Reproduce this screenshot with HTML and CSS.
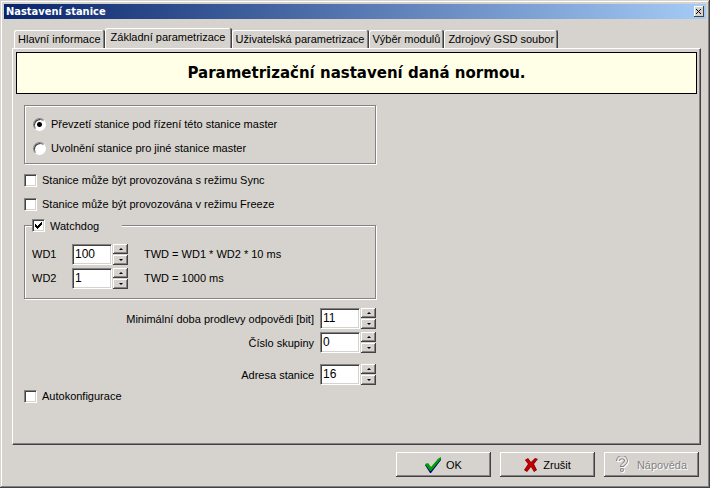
FILE: index.html
```html
<!DOCTYPE html>
<html lang="cs">
<head>
  <meta charset="UTF-8" />
  <meta name="viewport" content="width=device-width, initial-scale=1.0"/>
  <title>Nastavení stanice</title>
  <link rel="stylesheet" href="styles.css">
</head>
<body>
  <form class="window">
    <header class="titlebar">
      <h1>Nastavení stanice</h1>
      <button type="button" class="close" aria-label="Zavřít">
        <svg width="6" height="5" viewBox="0 0 6 5" shape-rendering="crispEdges"><path d="M0 0h1v1h1v1h1v1h1v1h1v1h-1v-1h-1v-1h-1v-1h-1v-1h-1zM4 0h1v1h-1v1h-1v1h-1v1h-1v1h-1v-1h1v-1h1v-1h1v-1h1z"/></svg>
      </button>
    </header>

    <div class="content">
      <nav class="tabs" role="tablist">
        <button type="button" role="tab" class="tab">Hlavní informace</button>
        <button type="button" role="tab" class="tab active" aria-selected="true">Základní parametrizace</button>
        <button type="button" role="tab" class="tab">Uživatelská parametrizace</button>
        <button type="button" role="tab" class="tab">Výběr modulů</button>
        <button type="button" role="tab" class="tab">Zdrojový GSD soubor</button>
      </nav>

      <main class="panel">
        <h2 class="banner">Parametrizační nastavení daná normou.</h2>

        <div class="settings">
          <fieldset class="group modes">
            <label class="option"><input type="radio" name="mode" checked>Převzetí stanice pod řízení této stanice master</label>
            <label class="option"><input type="radio" name="mode">Uvolnění stanice pro jiné stanice master</label>
          </fieldset>

          <div class="checks">
            <label class="option"><input type="checkbox">Stanice může být provozována s režimu Sync</label>
            <label class="option"><input type="checkbox">Stanice může být provozována v režimu Freeze</label>
          </div>

          <fieldset class="group watchdog">
            <legend><label class="option"><input type="checkbox" checked>Watchdog</label></legend>
            <div class="wd-row">
              <label for="wd1">WD1</label>
              <div class="spin">
                <input type="text" id="wd1" value="100">
                <div class="arrows">
                  <button type="button" class="up" aria-label="Více"></button>
                  <button type="button" class="down" aria-label="Méně"></button>
                </div>
              </div>
              <span>TWD = WD1 * WD2 * 10 ms</span>
            </div>
            <div class="wd-row">
              <label for="wd2">WD2</label>
              <div class="spin">
                <input type="text" id="wd2" value="1">
                <div class="arrows">
                  <button type="button" class="up" aria-label="Více"></button>
                  <button type="button" class="down" aria-label="Méně"></button>
                </div>
              </div>
              <span>TWD = 1000 ms</span>
            </div>
          </fieldset>

          <div class="fields">
            <div class="field">
              <label for="delay">Minimální doba prodlevy odpovědi [bit]</label>
              <div class="spin">
                <input type="text" id="delay" value="11">
                <div class="arrows">
                  <button type="button" class="up" aria-label="Více"></button>
                  <button type="button" class="down" aria-label="Méně"></button>
                </div>
              </div>
            </div>
            <div class="field">
              <label for="group">Číslo skupiny</label>
              <div class="spin">
                <input type="text" id="group" value="0">
                <div class="arrows">
                  <button type="button" class="up" aria-label="Více"></button>
                  <button type="button" class="down" aria-label="Méně"></button>
                </div>
              </div>
            </div>
            <div class="field address">
              <label for="address">Adresa stanice</label>
              <div class="spin">
                <input type="text" id="address" value="16">
                <div class="arrows">
                  <button type="button" class="up" aria-label="Více"></button>
                  <button type="button" class="down" aria-label="Méně"></button>
                </div>
              </div>
            </div>
          </div>

          <label class="option auto"><input type="checkbox">Autokonfigurace</label>
        </div>
      </main>

      <footer class="actions">
        <button type="submit" class="btn">
          <svg width="16" height="16" viewBox="0 0 16 16"><path d="M0 8l3-1 3 4 7-9 3-1v2L6 16H5z" fill="#000084"/><path d="M0 7l3-1 3 4 8-9 2-1v2L6 14H5z" fill="#00a200"/></svg>
          OK
        </button>
        <button type="button" class="btn">
          <svg width="14" height="16" viewBox="0 0 14 16"><path d="M1 3l3-2 3 4 4-4 3 1-4 5 3 6-3 2-3-5-4 5-3-2 4-6z" fill="#840000"/><path d="M1 3l3-1 3 4 4-4 2 0-4 5 3 6-2 1-3-5-4 5-2-2 4-5z" fill="#c60000"/></svg>
          Zrušit
        </button>
        <button type="button" class="btn" disabled>
          <svg width="13" height="17" viewBox="0 0 13 17" fill="none">
            <path d="M3 6c0-5 8-5 8 0 0 3-4 3-4 6" stroke="#fff" stroke-width="4"/>
            <path d="M2 5c0-5 8-5 8 0 0 3-4 3-4 6" stroke="#848284" stroke-width="4"/>
            <path d="M2 5c0-5 8-5 8 0 0 3-4 3-4 5" stroke="#e7e5e2" stroke-width="2"/>
            <circle cx="7" cy="15" r="2" fill="#fff"/>
            <circle cx="6" cy="14" r="2" fill="#848284"/>
            <circle cx="6" cy="14" r="1" fill="#e7e5e2"/>
          </svg>
          Nápověda
        </button>
      </footer>
    </div>
  </form>
</body>
</html>
```

FILE: styles.css
```css
* {
  box-sizing: border-box;
}
body {
  margin: 0;
  font-family: "Liberation Sans", Arial, sans-serif;
  font-size: 11px;
  line-height: 16px;
  background: #d6d3ce;
  color: #000;
}
button, input {
  font: inherit;
  color: inherit;
}
button {
  padding: 0;
  border: 0;
  background: #d6d3ce;
}
.window {
  display: flex;
  flex-direction: column;
  min-height: 100vh;
  padding: 4px;
  box-shadow: inset -1px -1px #424142, inset 1px 1px #d6d3ce, inset -2px -2px #848284, inset 2px 2px #fff;
}
.titlebar {
  display: flex;
  align-items: center;
  justify-content: space-between;
  height: 15px;
  padding: 0 2px;
  background: linear-gradient(to right, #08246b, #a5cbf7);
}
.titlebar h1 {
  margin: 0;
  font-family: "DejaVu Sans Condensed", "DejaVu Sans", sans-serif;
  font-size: 11px;
  line-height: 15px;
  color: #fff;
}
.close {
  display: flex;
  align-items: center;
  justify-content: center;
  width: 10px;
  height: 11px;
  box-shadow: inset -1px -1px #424142, inset 1px 1px #fff;
}
.content {
  display: flex;
  flex: 1;
  flex-direction: column;
  padding: 9px 5px 7px 8px;
}
.tabs {
  display: flex;
  align-items: flex-end;
  padding-left: 2px;
}
.tab {
  height: 18px;
  padding: 0 4px;
  white-space: nowrap;
  border-radius: 2px 2px 0 0;
  box-shadow: inset -1px 0 #424142, inset 1px 1px #fff, inset -2px 0 #848284;
}
.tab.active {
  height: 20px;
  padding: 0 6px 2px;
}
.panel {
  flex: 1;
  padding: 3px;
  border: 1px solid;
  border-color: #fff #424142 #424142 #fff;
  box-shadow: inset -1px -1px #848284;
}
.banner {
  margin: 0;
  font-family: "DejaVu Sans", sans-serif;
  font-size: 15px;
  line-height: 40px;
  text-align: center;
  border: 1px solid #000;
  background: #ffffe7;
}
.settings {
  width: 352px;
  margin: 11px 8px 0;
}
.group {
  margin: 0;
  padding: 0 7px;
  border: 1px solid #848284;
  box-shadow: 1px 1px #fff, inset 1px 1px #fff;
}
.option {
  display: flex;
  align-items: center;
  gap: 5px;
}
.option input {
  flex: none;
  appearance: none;
  width: 13px;
  height: 13px;
  margin: 0;
  background: #fff;
}
.option input[type="checkbox"] {
  border: 1px solid;
  border-color: #848284 #fff #fff #848284;
  box-shadow: inset 1px 1px #424142, inset -1px -1px #d6d3ce;
}
.option input[type="checkbox"]:checked {
  background: #fff url("data:image/svg+xml,%3Csvg xmlns='http://www.w3.org/2000/svg' width='7' height='7' shape-rendering='crispEdges'%3E%3Cpath d='M0 2h1v1h1v1h1v-1h1v-1h1v-1h1v-1h1v3h-1v1h-1v1h-1v1h-1v1h-1v-1h-1v-1h-1z'/%3E%3C/svg%3E") center no-repeat;
}
.option input[type="radio"] {
  border: 1px solid;
  border-color: #848284 #fff #fff #848284;
  border-radius: 50%;
  box-shadow: inset 1px 1px #424142;
}
.option input[type="radio"]:checked {
  background: radial-gradient(circle, #000 2px, #fff 3px);
}
.modes {
  display: flex;
  flex-direction: column;
  gap: 8px;
  padding: 10px 8px 7px;
}
.checks {
  display: flex;
  flex-direction: column;
  gap: 8px;
  margin: 8px 0 7px;
}
.watchdog {
  padding-bottom: 8px;
}
.watchdog legend {
  width: 90px;
  padding: 0;
  margin-bottom: 10px;
  background: #d6d3ce;
}
.watchdog legend .option {
  height: 13px;
}
.wd-row {
  display: grid;
  grid-template-columns: 40px 56px 1fr;
  align-items: center;
  height: 24px;
}
.wd-row span {
  padding-left: 16px;
}
.spin {
  display: flex;
}
.spin input {
  width: 40px;
  height: 21px;
  padding: 0 2px 1px;
  border: 1px solid;
  border-color: #848284 #fff #fff #848284;
  outline: none;
  background: #fff;
  font-size: 12px;
  box-shadow: inset 1px 1px #424142, inset -1px -1px #d6d3ce;
}
.arrows {
  display: flex;
  flex-direction: column;
  gap: 1px;
  margin-left: 1px;
}
.arrows button {
  display: flex;
  align-items: center;
  justify-content: center;
  width: 15px;
  height: 10px;
  box-shadow: inset -1px -1px #424142, inset 1px 1px #fff, inset -2px -2px #848284;
}
.arrows button::before {
  content: "";
  border: 2px solid transparent;
}
.arrows .up::before {
  border-top: 0;
  border-bottom-color: #000;
}
.arrows .down::before {
  border-bottom: 0;
  border-top-color: #000;
}
.fields {
  display: flex;
  flex-direction: column;
  gap: 3px;
  margin-top: 9px;
}
.field {
  display: flex;
  align-items: center;
  justify-content: flex-end;
  gap: 6px;
}
.address {
  margin-top: 8px;
}
.auto {
  margin-top: 3px;
}
.actions {
  display: flex;
  justify-content: flex-end;
  gap: 9px;
  margin: 7px 2px 0 0;
}
.btn {
  display: flex;
  align-items: center;
  justify-content: center;
  gap: 5px;
  width: 95px;
  height: 25px;
  box-shadow: inset -1px -1px #424142, inset 1px 1px #fff, inset -2px -2px #848284;
}
.btn:disabled {
  gap: 8px;
  color: #848284;
  text-shadow: 1px 1px #fff;
}
```
